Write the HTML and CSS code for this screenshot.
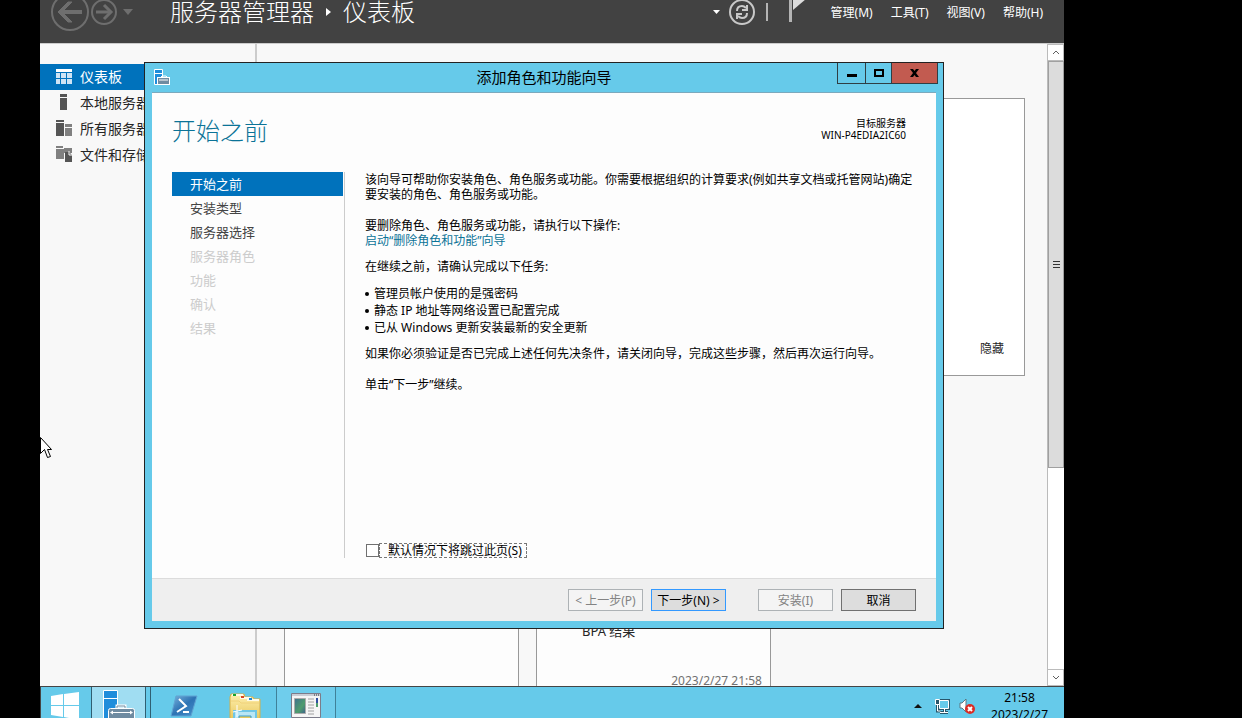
FILE: index.html
```html
<!DOCTYPE html>
<html lang="zh-CN">
<head>
  <meta charset="utf-8">
  <title>服务器管理器</title>
  <link rel="stylesheet" href="styles.css">
</head>
<body>
  <div class="desktop">
    <!-- Server manager header -->
    <header class="header">
      <button class="icon-button back" aria-label="后退">
        <svg width="38" height="38" viewBox="0 0 38 38" fill="none" stroke="#6e6e6e">
          <circle cx="19" cy="19" r="18" stroke-width="2"/>
          <path d="M31 19H9" stroke-width="4"/>
          <path d="M17 9h4L11 19l10 10h-4L7 19z" fill="#6e6e6e"/>
        </svg>
      </button>
      <button class="icon-button" aria-label="前进">
        <svg width="26" height="26" viewBox="0 0 26 26" fill="none" stroke="#6e6e6e">
          <circle cx="13" cy="13" r="12" stroke-width="2"/>
          <path d="M5 13h15" stroke-width="3"/>
          <path d="M13 6l7 7-7 7" stroke-width="3"/>
        </svg>
      </button>
      <button class="icon-button history" aria-label="历史记录">
        <svg width="10" height="6" viewBox="0 0 10 6"><path d="M0 0h10L5 6z" fill="#6e6e6e"/></svg>
      </button>
      <h1 class="app-title">
        <span>服务器管理器</span>
        <svg width="5" height="8" viewBox="0 0 5 8"><path d="M0 0l5 4-5 4z" fill="#fff"/></svg>
        <span>仪表板</span>
      </h1>
      <div class="tools">
        <svg width="7" height="4" viewBox="0 0 7 4"><path d="M0 0h7L3.5 4z" fill="#fff"/></svg>
        <button class="icon-button refresh" aria-label="刷新">
          <svg width="26" height="26" viewBox="0 0 26 26" fill="none" stroke="#c8c8c8">
            <circle cx="13" cy="13" r="12" stroke-width="2"/>
            <path d="M8 12c0-3 2-5 5-5 2 0 3 1 4 2M18 14c0 3-2 5-5 5-2 0-3-1-4-2" stroke-width="2"/>
            <path d="M18 6v5h-5M8 20v-5h5" stroke-width="2"/>
          </svg>
        </button>
        <span class="bar"></span>
        <button class="icon-button flag" aria-label="通知">
          <svg width="17" height="26" viewBox="0 0 17 26"><path d="M0 0h3v26H0z" fill="#b4b4b4"/><path d="M4 0h13v3L4 14z" fill="#ddd"/></svg>
        </button>
      </div>
      <nav class="menu">
        <a href="#">管理(M)</a>
        <a href="#">工具(T)</a>
        <a href="#">视图(V)</a>
        <a href="#">帮助(H)</a>
      </nav>
    </header>

    <div class="main">
      <!-- Sidebar -->
      <nav class="sidebar">
        <a href="#" class="active">
          <svg width="16" height="16" viewBox="0 0 16 16"><path d="M0 1h16v3H0z" fill="#fff"/><path d="M0 5h4v5H0zM5 5h5v5H5zM11 5h5v5h-5zM0 11h4v5H0zM5 11h5v5H5zM11 11h5v5h-5z" fill="#cfe4f5"/></svg>
          仪表板
        </a>
        <a href="#">
          <svg width="16" height="16" viewBox="0 0 16 16"><path d="M4 0h7v3H4zM4 4h7v12H4z" fill="#555"/></svg>
          本地服务器
        </a>
        <a href="#">
          <svg width="16" height="16" viewBox="0 0 16 16"><path d="M0 0h8v2H0zM0 3h8v13H0z" fill="#555"/><path d="M9 4h7v3H9zM9 8h7v8H9z" fill="#808080"/></svg>
          所有服务器
        </a>
        <a href="#">
          <svg width="16" height="16" viewBox="0 0 16 16"><path d="M0 0h7v2H0zM0 3h8v10H0zM8 2h8v5H8z" fill="#808080"/><path d="M9 6h4l3 3v7H9z" fill="#555"/><path d="M13 5v4h3" fill="none" stroke="#f8f8f8"/></svg>
          文件和存储服务
        </a>
      </nav>

      <!-- Dashboard tiles -->
      <div class="dashboard">
        <section class="welcome">
          <button class="hide-button">隐藏</button>
        </section>
        <div class="tiles">
          <section class="tile"></section>
          <section class="tile">
            <p>BPA 结果</p>
            <time>2023/2/27 21:58</time>
          </section>
        </div>
      </div>

      <div class="scrollbar">
        <button aria-label="向上滚动"><svg width="8" height="5" viewBox="0 0 8 5"><path d="M1 4l3-3 3 3" fill="none" stroke="#606060"/></svg></button>
        <div class="track">
          <div class="thumb"><span></span><span></span><span></span></div>
        </div>
        <button aria-label="向下滚动"><svg width="8" height="5" viewBox="0 0 8 5"><path d="M1 1l3 3 3-3" fill="none" stroke="#606060"/></svg></button>
      </div>
    </div>

    <!-- Taskbar -->
    <footer class="taskbar">
      <button class="task start" aria-label="开始">
        <svg width="28" height="28" viewBox="0 0 28 28"><path d="M0 4l12-2v11H0zM13 2l15-2v13H13zM0 14h12v11L0 23zM13 14h15v14l-15-3z" fill="#fff"/></svg>
      </button>
      <button class="task manager" aria-label="服务器管理器">
        <svg width="34" height="32" viewBox="0 0 34 32">
          <path d="M1.500.5h14v34h-14z" fill="#1f8ddb" stroke="#fff"/>
          <path d="M1 8.500h15" stroke="#fff"/>
          <path d="M15 19v-3h8v3" fill="none" stroke="#fff" stroke-width="3"/>
          <path d="M15 19v-3h8v3" fill="none" stroke="#6f8ba1"/>
          <rect x="6.500" y="18.500" width="26" height="16" rx="2" fill="#6f8ba1" stroke="#fff"/>
          <path d="M9 22.500h20" stroke="#fff"/>
          <path d="M8 22.500l3-2v4zM31 22.500l-3-2v4z" fill="#fff"/>
        </svg>
      </button>
      <button class="task shell" aria-label="Windows PowerShell">
        <svg width="28" height="22" viewBox="0 0 28 22">
          <defs><linearGradient id="blue" x1="0" y1="0" x2="1" y2="1"><stop offset="0" stop-color="#7bb3dc"/><stop offset=".5" stop-color="#2d73b4"/><stop offset="1" stop-color="#4a92cc"/></linearGradient></defs>
          <path d="M6 1h21l-6 20H1z" fill="url(#blue)" stroke="#5fa3d3" stroke-linejoin="round"/>
          <path d="M9 4l7 7-9 6" fill="none" stroke="#fff" stroke-width="2"/><path d="M13 17h6" stroke="#fff" stroke-width="2"/>
        </svg>
      </button>
      <button class="task explorer" aria-label="文件资源管理器">
        <svg width="32" height="26" viewBox="0 0 32 26">
          <defs><linearGradient id="folder" x1="0" y1="0" x2="0" y2="1"><stop offset="0" stop-color="#fff0b0"/><stop offset="1" stop-color="#e8c85d"/></linearGradient></defs>
          <path d="M1 4l1-3h13l1 3h8l1 2h6v20H1z" fill="url(#folder)" stroke="#d4b04a"/>
          <path d="M3 2h11M11 5h11M18 7h12" stroke="#fffbe8" stroke-width="2"/>
          <path d="M4 2h3" stroke="#16a52e" stroke-width="2"/>
          <path d="M12 4h3" stroke="#d84523" stroke-width="2"/>
          <path d="M20 6h3" stroke="#1988dc" stroke-width="2"/>
          <path d="M2 8h8l2 2h18" fill="none" stroke="#f0d27a"/>
          <path d="M5 26v-8h22v8" fill="#b9e6f5" stroke="#6fc6e6" stroke-width="2"/>
          <path d="M10 26v-3h12v3" fill="#e5ca61" stroke="#3a9ed1"/>
          <path d="M8 12v12M4 19l9-2" stroke="#fff"/>
        </svg>
      </button>
      <button class="task program" aria-label="应用程序">
        <svg width="30" height="26" viewBox="0 0 30 26">
          <defs><linearGradient id="screen" x1="0" y1="0" x2="1" y2="1"><stop offset="0" stop-color="#3f6f8f"/><stop offset=".6" stop-color="#4f9d6d"/><stop offset="1" stop-color="#3d608c"/></linearGradient></defs>
          <path d="M.5.5h29v24H.5z" fill="#f5f5f5" stroke="#7c7c8a"/>
          <path d="M1 2h28" stroke="#c9ccd4" stroke-width="2"/><path d="M23 2h1M25 2h1M27 2h1" stroke="#333"/>
          <path d="M3.500 5.500h11v15h-11z" fill="url(#screen)" stroke="#aaa"/>
          <path d="M17 6h6M17 9h6M17 12h6M17 15h6M17 18h6M17 21h6" stroke="#a0a0a0"/>
          <path d="M25 5h2v5h-2z" fill="#2f4fa0"/><path d="M25 10h2v4h-2z" fill="#4f9d6d"/>
        </svg>
      </button>
      <div class="tray">
        <svg width="8" height="4" viewBox="0 0 8 4"><path d="M0 4l4-4 4 4z" fill="#111"/></svg>
        <svg width="17" height="16" viewBox="0 0 17 16" fill="none">
          <path d="M5.500 2.500h9v8h-9zM10.500 11v3M6 14.500h8M3.500 7v6h3" stroke="#28566b" stroke-width="3"/>
          <path d="M6 3h8v7H6z" fill="#66caea"/>
          <path d="M5.500 2.500h9v8h-9zM10.500 11v3M6 14.500h8M3.500 7v6h3" stroke="#fff"/>
          <path d="M1.500 1.500h4v5h-4z" fill="#28566b" stroke="#fff"/>
        </svg>
        <svg width="16" height="16" viewBox="0 0 16 16">
          <path d="M1 5h2l4-4v13l-4-4H1z" fill="#fff" stroke="#5d7682"/>
          <circle cx="11" cy="11" r="5" fill="#dc2b24"/>
          <path d="M9 9l4 4M13 9l-4 4" stroke="#fff" stroke-width="2"/>
        </svg>
        <div class="clock">21:58<br>2023/2/27</div>
      </div>
    </footer>

    <!-- Add roles and features wizard -->
    <div class="wizard" role="dialog" aria-labelledby="wizardTitle">
      <div class="titlebar">
        <svg class="title-icon" width="16" height="16" viewBox="0 0 16 16">
          <path d="M.5.5h8v15h-8z" fill="#1f8ddb" stroke="#fff"/><path d="M0 4.500h9" stroke="#fff"/>
          <path d="M6 9l2-2h4l2 2" fill="none" stroke="#fff"/>
          <rect x="3.500" y="8.500" width="12" height="7" fill="#6f8ba1" stroke="#fff"/><path d="M5 11h9" stroke="#fff"/>
        </svg>
        <h2 id="wizardTitle">添加角色和功能向导</h2>
        <div class="window-buttons">
          <button class="minimize" aria-label="最小化"><svg width="10" height="10" viewBox="0 0 10 10"><path d="M0 6h10v3H0z"/></svg></button>
          <button class="maximize" aria-label="最大化"><svg width="10" height="8" viewBox="0 0 10 8"><path d="M1 1h8v6H1z" fill="none" stroke="#000" stroke-width="2"/></svg></button>
          <button class="close" aria-label="关闭"><svg width="9" height="8" viewBox="0 0 9 8"><path d="M0 0h3l1.500 2L6 0h3L6 4l3 4H6L4.500 6 3 8H0l3-4z"/></svg></button>
        </div>
      </div>

      <div class="client">
        <div class="page-head">
          <h3>开始之前</h3>
          <p class="target">目标服务器<br>WIN-P4EDIA2IC60</p>
        </div>
        <div class="page-body">
          <ol class="steps">
            <li class="current">开始之前</li>
            <li>安装类型</li>
            <li>服务器选择</li>
            <li class="disabled">服务器角色</li>
            <li class="disabled">功能</li>
            <li class="disabled">确认</li>
            <li class="disabled">结果</li>
          </ol>
          <div class="text">
            <p>该向导可帮助你安装角色、角色服务或功能。你需要根据组织的计算要求(例如共享文档或托管网站)确定要安装的角色、角色服务或功能。</p>
            <p class="spaced">要删除角色、角色服务或功能，请执行以下操作:<br><a href="#">启动“删除角色和功能”向导</a></p>
            <p>在继续之前，请确认完成以下任务:</p>
            <ul>
              <li>管理员帐户使用的是强密码</li>
              <li>静态 IP 地址等网络设置已配置完成</li>
              <li>已从 Windows 更新安装最新的安全更新</li>
            </ul>
            <p>如果你必须验证是否已完成上述任何先决条件，请关闭向导，完成这些步骤，然后再次运行向导。</p>
            <p class="spaced">单击“下一步”继续。</p>
            <div class="skip">
              <input type="checkbox" id="skipPage">
              <label for="skipPage">默认情况下将跳过此页(S)</label>
            </div>
          </div>
        </div>
        <div class="actions">
          <button disabled>&lt; 上一步(P)</button>
          <button class="default">下一步(N) &gt;</button>
          <button class="install" disabled>安装(I)</button>
          <button>取消</button>
        </div>
      </div>
    </div>

    <svg class="cursor" width="12" height="22" viewBox="0 0 12 22"><path d="M.5.5v16l4-4 3 8 3-1-3-7h4z" fill="#fff" stroke="#000"/></svg>
  </div>
</body>
</html>
```

FILE: styles.css
```css
* {
  box-sizing: border-box;
}
body {
  margin: 0;
  background: #000;
  font-family: "Noto Sans", "Noto Sans CJK SC", sans-serif;
  font-size: 12px;
  color: #000;
}
h1, h2, h3, p, ul, ol {
  margin: 0;
  padding: 0;
  font-weight: normal;
}
ul, ol {
  list-style: none;
}
a {
  color: inherit;
  text-decoration: none;
}
button {
  font: inherit;
  padding: 0;
}
svg {
  display: block;
  flex: none;
}
.desktop {
  position: relative;
  display: flex;
  flex-direction: column;
  height: 100vh;
  margin: 0 178px 0 40px;
  overflow: hidden;
  background: #f8f8f8;
}

/* Header */
.header {
  display: flex;
  align-items: center;
  flex: none;
  height: 43px;
  padding: 0 21px 19px 11px;
  background: #424242;
  color: #fff;
}
.icon-button {
  background: none;
  border: none;
}
.back {
  margin-right: 2px;
}
.history {
  margin-left: 6px;
}
.app-title {
  display: flex;
  align-items: center;
  gap: 12px;
  margin-left: 37px;
  font-size: 24px;
  font-weight: 300;
  line-height: 24px;
  white-space: nowrap;
}
.tools {
  display: flex;
  align-items: center;
  margin-left: auto;
}
.refresh {
  margin: 0 11px 0 9px;
}
.bar {
  width: 2px;
  height: 18px;
  background: #b4b4b4;
}
.flag {
  margin: 0 25px 6px 21px;
}
.menu {
  display: flex;
  gap: 18px;
  white-space: nowrap;
}

/* Main area */
.main {
  display: flex;
  flex: 1;
  min-height: 0;
  border-top: 1px solid #ccc;
}
.sidebar {
  flex: none;
  width: 217px;
  padding-top: 20px;
  border-right: 2px solid #ccc;
}
.sidebar a {
  display: flex;
  align-items: center;
  gap: 8px;
  height: 26px;
  padding: 0 0 2px 16px;
  font-size: 14px;
  color: #262626;
}
.sidebar .active {
  background: #0072bc;
  color: #fff;
}
.dashboard {
  flex: 1;
  padding: 54px 22px 0 27px;
  overflow: hidden;
}
.welcome {
  display: flex;
  align-items: flex-end;
  justify-content: flex-end;
  height: 278px;
  padding: 18px 20px;
  border: 1px solid #999;
  background: #fff;
}
.hide-button {
  border: none;
  background: none;
  color: #262626;
}
.tiles {
  display: flex;
  gap: 17px;
  margin-top: 40px;
}
.tile {
  display: flex;
  flex-direction: column;
  justify-content: flex-end;
  width: 235px;
  height: 290px;
  padding: 0 8px 15px 45px;
  border: 1px solid #999;
  background: #fdfdfd;
}
.tile p {
  font-size: 13px;
  line-height: 18px;
  color: #262626;
}
.tile time {
  margin-top: 32px;
  text-align: right;
  line-height: 18px;
  color: #707070;
}
.scrollbar {
  display: flex;
  flex-direction: column;
  flex: none;
  width: 17px;
  border-left: 1px solid #bbb;
}
.scrollbar button {
  display: flex;
  align-items: center;
  justify-content: center;
  flex: none;
  height: 17px;
  border: 1px solid #bbb;
  border-left: none;
  background: #fff;
}
.track {
  flex: 1;
  background: #fff;
}
.thumb {
  display: flex;
  flex-direction: column;
  align-items: center;
  justify-content: center;
  gap: 2px;
  height: 67%;
  border: 1px solid #a0a0a0;
  background: #dcdcdc;
}
.thumb span {
  width: 7px;
  height: 1px;
  background: #333;
}

/* Taskbar */
.taskbar {
  display: flex;
  flex: none;
  height: 32px;
  border-top: 1px solid #454545;
  border-left: 1px solid #454545;
  background: #66caea;
}
.task {
  display: flex;
  align-items: flex-start;
  justify-content: center;
  flex: none;
  border: none;
  background: none;
}
.start {
  width: 50px;
  padding: 5px 3px 0 0;
}
.manager {
  width: 55px;
  padding-top: 3px;
  border: solid #2f5f72;
  border-width: 0 1px;
  background: #a0ddf2;
}
.shell {
  width: 66px;
  margin-left: 4px;
  padding-top: 8px;
  border-left: 1px solid #2f5f72;
}
.explorer {
  width: 60px;
  padding: 6px 2px 0 0;
}
.program {
  width: 60px;
  padding-top: 6px;
  border: solid #3f8199;
  border-width: 0 1px;
  background: #6fcdec;
}
.tray {
  display: flex;
  align-items: center;
  gap: 8px;
  height: 38px;
  margin-left: auto;
  padding-right: 16px;
}
.tray svg:first-child {
  margin-right: 4px;
}
.clock {
  margin-left: 8px;
  text-align: center;
  line-height: 17px;
}

/* Wizard window */
.wizard {
  position: absolute;
  top: 62px;
  left: 104px;
  right: 120px;
  bottom: 89px;
  display: flex;
  flex-direction: column;
  padding: 0 7px 7px;
  border: 1px solid #222;
  background: #66caea;
}
.titlebar {
  display: grid;
  grid-template-columns: 1fr auto 1fr;
  flex: none;
  height: 29px;
}
.title-icon {
  margin: 6px 0 0 2px;
}
.titlebar h2 {
  font-size: 15px;
  line-height: 28px;
}
.window-buttons {
  display: flex;
  justify-self: end;
  height: 21px;
  margin-right: -2px;
}
.window-buttons button {
  display: flex;
  align-items: center;
  justify-content: center;
  width: 28px;
  border: 1px solid #2f3e44;
  border-top: none;
  border-right: none;
  background: none;
}
.window-buttons .maximize {
  width: 26px;
}
.window-buttons .close {
  width: 47px;
  border-right: 1px solid #2f3e44;
  background: #c25b50;
}
.client {
  display: flex;
  flex-direction: column;
  flex: 1;
  border-top: 1px solid #7ba9bd;
  background: #fdfdfd;
}
.page-head {
  display: flex;
  justify-content: space-between;
  height: 79px;
  padding: 24px 30px 0 20px;
}
.page-head h3 {
  font-size: 24px;
  font-weight: 300;
  line-height: 28px;
  color: #0b7397;
}
.target {
  font-size: 10px;
  line-height: 12px;
  text-align: right;
}
.page-body {
  display: flex;
  flex: 1;
  padding: 0 20px 20px;
}
.steps {
  flex: none;
  width: 173px;
  padding-right: 1px;
  border-right: 1px solid #ccc;
  font-size: 13px;
  line-height: 24px;
  color: #444;
}
.steps li {
  padding-left: 18px;
}
.steps .current {
  background: #0072bc;
  color: #fff;
}
.steps .disabled {
  color: #ccc;
}
.text {
  display: flex;
  flex-direction: column;
  flex: 1;
  padding-left: 20px;
  line-height: 15px;
}
.text p {
  margin-bottom: 11px;
}
.text .spaced {
  margin-top: 5px;
}
.text a {
  color: #0b7397;
}
.text ul {
  margin-bottom: 10px;
  line-height: 17px;
}
.text ul li {
  display: flex;
  align-items: center;
  gap: 5px;
}
.text ul li::before {
  content: "";
  width: 4px;
  height: 4px;
  border-radius: 50%;
  background: #000;
}
.skip {
  display: flex;
  align-items: center;
  margin-top: auto;
}
.skip input {
  appearance: none;
  width: 13px;
  height: 13px;
  margin: 0 0 0 1px;
  border: 1px solid #707070;
  background: #fff;
}
.skip label {
  padding: 0 4px 0 8px;
  border: 1px dashed #777;
  line-height: 13px;
}
.actions {
  display: flex;
  justify-content: flex-end;
  gap: 8px;
  flex: none;
  height: 43px;
  padding: 10px 20px;
  border-top: 1px solid #dcdcdc;
  background: #efefef;
}
.actions button {
  width: 75px;
  height: 22px;
  border: 1px solid #707070;
  background: #ddd;
  white-space: nowrap;
}
.actions button:disabled {
  border-color: #adb2b5;
  background: #f4f4f4;
  color: #838383;
}
.actions .default {
  border-color: #3399ff;
}
.actions .install {
  margin-left: 24px;
}

.cursor {
  position: absolute;
  top: 437px;
  left: 0;
}
```
